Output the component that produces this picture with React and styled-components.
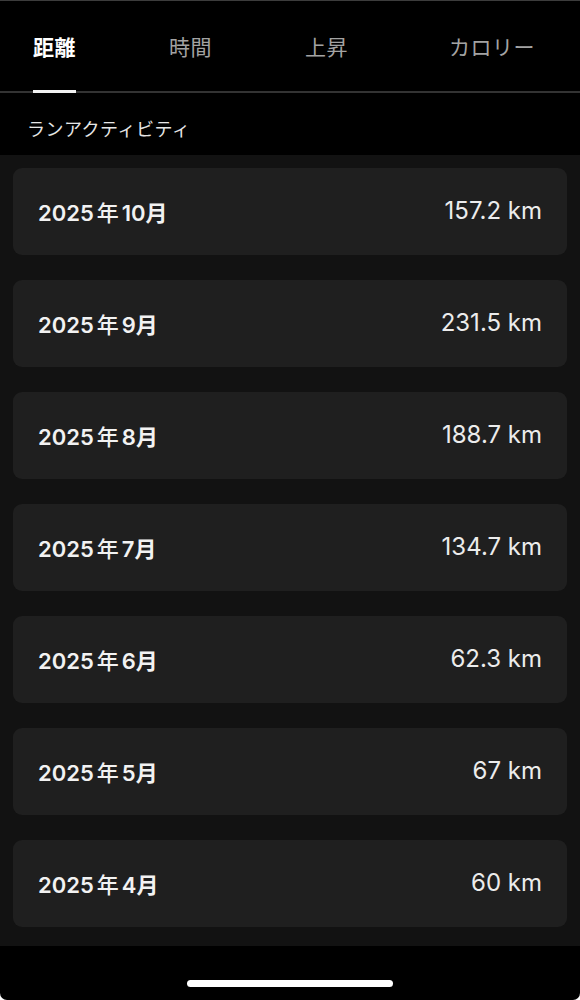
import React from 'react'
import styled, { createGlobalStyle } from 'styled-components'

const GlobalStyle = createGlobalStyle`
  html, body {
    margin: 0;
    padding: 0;
    background: #fff;
  }
  body {
    font-family: "Inter", "Noto Sans CJK JP", sans-serif;
    -webkit-font-smoothing: antialiased;
  }
`;

const Screen = styled.div`
  width: 580px;
  height: 1000px;
  display: flex;
  flex-direction: column;
  background: #000;
  border-top: 1px solid #3c3c3c;
  border-radius: 0 0 7px 7px;
  box-sizing: border-box;
  overflow: hidden;
`;

const TabBar = styled.div`
  height: 90px;
  display: flex;
  gap: 93px;
  padding: 0 45px 0 33px;
  border-bottom: 2px solid #333;
  flex-shrink: 0;
`;

const Tab = styled.div`
  position: relative;
  display: flex;
  align-items: center;
  font-family: "Noto Sans CJK JP", sans-serif;
  font-size: 21px;
  font-weight: ${p => (p.$active ? 700 : 400)};
  color: ${p => (p.$active ? '#fff' : '#a3a3a3')};
  letter-spacing: 0.5px;

  &:last-child {
    margin-left: auto;
  }
`;

const Underline = styled.span`
  position: absolute;
  left: 0;
  right: 0;
  bottom: -2px;
  height: 3px;
  background: #f2f2f2;
`;

const SectionHeader = styled.div`
  height: 62px;
  display: flex;
  align-items: center;
  padding: 8px 27px 0;
  box-sizing: border-box;
  font-family: "Noto Sans CJK JP", sans-serif;
  font-size: 18px;
  letter-spacing: 0.5px;
  color: #e6e6e6;
  flex-shrink: 0;
`;

const List = styled.div`
  background: #121212;
  display: flex;
  flex-direction: column;
  gap: 25px;
  padding: 13px 13px 19px 13px;
`;

const Card = styled.div`
  height: 87px;
  display: flex;
  align-items: center;
  justify-content: space-between;
  padding: 0 25px;
  background: #1f1f1f;
  border-radius: 9px;
`;

const Month = styled.span`
  display: flex;
  align-items: baseline;
  font-size: 22px;
  font-weight: 600;
  color: #f2f2f2;
  padding-bottom: 2px;
`;

const Kanji = styled.span`
  margin: 0 3px;
  font-weight: 500;
`;

const Distance = styled.span`
  font-size: 24px;
  font-weight: 400;
  color: #ececec;
  padding-bottom: 3px;
`;

const Footer = styled.div`
  flex: 1;
  display: flex;
  justify-content: center;
  align-items: flex-end;
  padding-bottom: 13px;
`;

const HomeIndicator = styled.div`
  width: 206px;
  height: 7px;
  border-radius: 4px;
  background: #fff;
`;

const tabs = ['距離', '時間', '上昇', 'カロリー'];

const months = [
  { month: 10, value: '157.2 km' },
  { month: 9, value: '231.5 km' },
  { month: 8, value: '188.7 km' },
  { month: 7, value: '134.7 km' },
  { month: 6, value: '62.3 km' },
  { month: 5, value: '67 km' },
  { month: 4, value: '60 km' },
];

export default function App() {
  return (
    <>
      <GlobalStyle />
      <Screen>
        <TabBar>
          {tabs.map((t, i) => (
            <Tab key={t} $active={i === 0}>
              {t}
              {i === 0 && <Underline />}
            </Tab>
          ))}
        </TabBar>
        <SectionHeader>ランアクティビティ</SectionHeader>
        <List>
          {months.map(m => (
            <Card key={m.month}>
              <Month>
                2025<Kanji>年</Kanji>{m.month}月
              </Month>
              <Distance>{m.value}</Distance>
            </Card>
          ))}
        </List>
        <Footer>
          <HomeIndicator />
        </Footer>
      </Screen>
    </>
  )
}
